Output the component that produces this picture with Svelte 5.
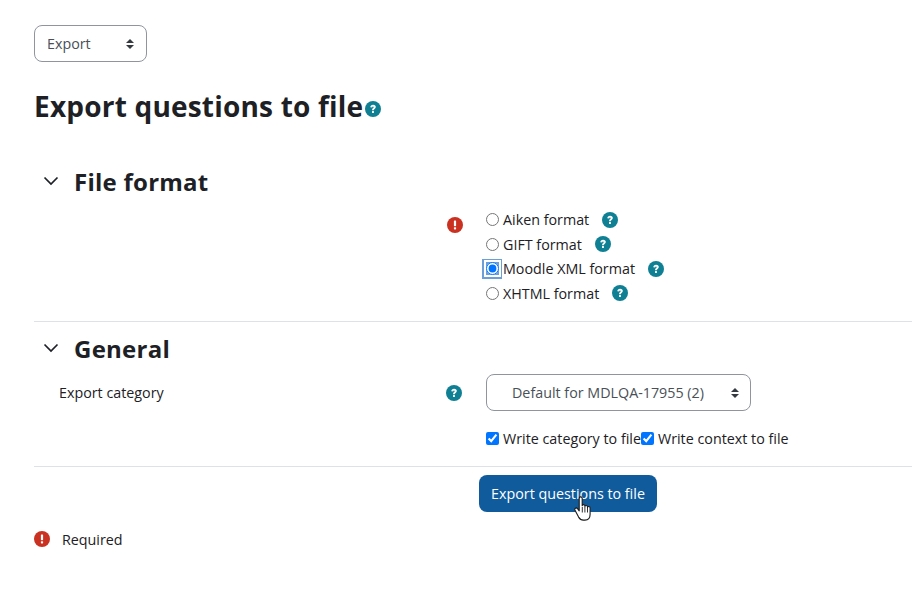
<script>
  const formats = [
    { name: 'Aiken format', checked: false },
    { name: 'GIFT format', checked: false },
    { name: 'Moodle XML format', checked: true },
    { name: 'XHTML format', checked: false }
  ];
</script>

{#snippet help()}
  <svg class="icon" viewBox="0 0 16 16" aria-hidden="true">
    <circle cx="8" cy="8" r="8" fill="#0f7f94" />
    <path d="M5.300 6.300c0-1.500 1.200-2.500 2.800-2.500s2.700.9 2.700 2.300c0 1.900-2 1.800-2 3.200H7c0-2.300 1.700-2.100 1.700-3.100 0-.4-.3-.6-.7-.6-.5 0-.8.300-.8.800z" fill="#fff" />
    <rect x="7" y="10" width="1.900" height="2" rx=".3" fill="#fff" />
  </svg>
{/snippet}

{#snippet required()}
  <svg class="icon" viewBox="0 0 16 16" aria-hidden="true">
    <circle cx="8" cy="8" r="8" fill="#ca3120" />
    <rect x="6.900" y="3.400" width="2.200" height="5.800" rx=".6" fill="#fff" />
    <rect x="6.900" y="10.200" width="2.200" height="2.200" rx=".6" fill="#fff" />
  </svg>
{/snippet}

{#snippet chevron()}
  <svg class="chevron" viewBox="0 0 16 10" aria-hidden="true">
    <path d="M1.500 1.500 8 8l6.500-6.500" fill="none" stroke="#1d2125" stroke-width="1.700" />
  </svg>
{/snippet}

{#snippet updown()}
  <svg class="updown" viewBox="0 0 8 10" aria-hidden="true">
    <path d="M4 0 8 4H0zM4 10 0 6h8z" fill="#343a40" />
  </svg>
{/snippet}

<main class="page">
  <div class="select tertiary">
    <span>Export</span>
    {@render updown()}
  </div>

  <h1>Export questions to file{@render help()}</h1>

  <section class="section first">
    <h2>{@render chevron()}<span>File format</span></h2>
    <div class="row">
      <div class="label"></div>
      <div class="mark required-mark">{@render required()}</div>
      <div class="radios">
        {#each formats as f}
          <label class="radio">
            <span class="box" class:focused={f.checked}>
              <input type="radio" name="format" checked={f.checked} />
            </span>
            <span class="text">{f.name}</span>
            {@render help()}
          </label>
        {/each}
      </div>
    </div>
  </section>

  <section class="section second">
    <h2>{@render chevron()}<span>General</span></h2>
    <div class="row category-row">
      <div class="label">Export category</div>
      <div class="mark help-mark">{@render help()}</div>
      <div class="select category">
        <span>Default for MDLQA-17955 (2)</span>
        {@render updown()}
      </div>
    </div>
    <div class="row checks-row">
      <div class="label"></div>
      <div class="mark"></div>
      <div class="checks">
        <label class="check"><input type="checkbox" checked /><span>Write category to file</span></label>
        <label class="check"><input type="checkbox" checked /><span>Write context to file</span></label>
      </div>
    </div>
  </section>

  <div class="actions">
    <button class="submit" type="button">Export questions to file</button>
    <svg class="cursor" viewBox="0 0 18 26" aria-hidden="true">
      <path d="M5.200 2.400c0-2 3-2 3 0v7.400c0-1.600 2.700-1.600 2.700 0v.8c0-1.500 2.600-1.500 2.600.1v.9c0-1.500 2.600-1.400 2.600.3v6.400c0 3.400-2 5.800-5.200 5.800H9.300c-2.300 0-3.500-1-4.700-3L1 14.300c-1-1.800 1.300-3.200 2.500-1.700l1.700 2.200z" fill="#fff" stroke="#1a1a1a" stroke-width="1.100" stroke-linejoin="round" />
      <path d="M8.300 11v5.500M10.900 11v5.500M13.500 11.500v5" stroke="#1a1a1a" stroke-width=".9" fill="none" />
    </svg>
  </div>

  <div class="legend">
    {@render required()}
    <span>Required</span>
  </div>
</main>

<style>
  :global(body) {
    margin: 0;
    background: #fff;
  }
  .page {
    width: 912px;
    height: 591px;
    overflow: hidden;
    box-sizing: border-box;
    padding: 25px 0 0 34px;
    font-family: "Open Sans", "Noto Sans", "Liberation Sans", sans-serif;
    font-size: 14.3px;
    color: #1d2125;
  }
  .select {
    box-sizing: border-box;
    display: flex;
    align-items: center;
    justify-content: space-between;
    height: 37px;
    border: 1px solid #8f959e;
    border-radius: 8px;
    color: #495057;
  }
  .tertiary {
    width: 113px;
    padding: 0 12px;
  }
  .updown {
    width: 8px;
    height: 10px;
    flex: none;
  }
  h1 {
    display: flex;
    align-items: center;
    margin: 24px 0 0;
    height: 40px;
    font-size: 28px;
    font-weight: 700;
    letter-spacing: 0.2px;
    line-height: 40px;
  }
  h1 .icon {
    margin: 6px 0 0 2px;
  }
  .icon {
    display: block;
    width: 16px;
    height: 16px;
    flex: none;
  }
  h2 {
    display: flex;
    align-items: center;
    margin: 0;
    height: 36px;
    font-size: 24px;
    font-weight: 700;
    letter-spacing: 0.25px;
    padding-left: 9px;
  }
  h2 span {
    margin-left: 15px;
  }
  .chevron {
    width: 16px;
    height: 10px;
    flex: none;
  }
  .section.first {
    margin-top: 37px;
    height: 158px;
    border-bottom: 1px solid #dee2e6;
  }
  .section.second {
    height: 136px;
    margin-top: 8px;
    border-bottom: 1px solid #dee2e6;
  }
  .row {
    display: grid;
    grid-template-columns: 413px 39px 1fr;
  }
  .category-row {
    margin-top: 8px;
  }
  .label {
    padding-left: 25px;
    line-height: 38px;
  }
  .mark {
    display: flex;
    align-items: center;
    height: 38px;
  }
  .required-mark {
    height: 52px;
  }
  .help-mark .icon {
    margin-left: -1px;
  }
  .radios {
    display: flex;
    flex-direction: column;
    margin-top: 8.5px;
  }
  .radio {
    display: flex;
    align-items: center;
    height: 24.5px;
  }
  .box {
    display: flex;
    align-items: center;
    justify-content: center;
    width: 13px;
    height: 13px;
    margin-right: 4px;
    position: relative;
  }
  .box input {
    margin: 0;
    width: 13px;
    height: 13px;
    position: relative;
  }
  .box.focused::before {
    content: "";
    position: absolute;
    left: -4px;
    top: -3px;
    width: 20px;
    height: 20px;
    background: #6b9fd8;
  }
  .box.focused input {
    outline: 2px solid #fff;
    outline-offset: 0;
    border-radius: 50%;
  }
  .radio .icon {
    margin-left: 13px;
  }
  .category {
    width: 265px;
    padding: 0 11px 0 25px;
  }
  .checks-row {
    margin-top: 14px;
  }
  .checks {
    display: flex;
    height: 24px;
    align-items: center;
  }
  .check {
    display: flex;
    align-items: center;
  }
  .check input {
    margin: 0 4px 0 0;
    width: 13px;
    height: 13px;
  }
  .actions {
    position: relative;
    margin: 8px 0 0 445px;
    height: 37px;
  }
  .submit {
    box-sizing: border-box;
    width: 178px;
    height: 37px;
    border: 0;
    padding: 0;
    border-radius: 8px;
    background: #0f5b9c;
    color: #fff;
    font: inherit;
  }
  .cursor {
    position: absolute;
    left: 95px;
    top: 21px;
    width: 18px;
    height: 26px;
  }
  .legend {
    display: flex;
    align-items: center;
    gap: 12px;
    margin-top: 15px;
    height: 24px;
  }
</style>
